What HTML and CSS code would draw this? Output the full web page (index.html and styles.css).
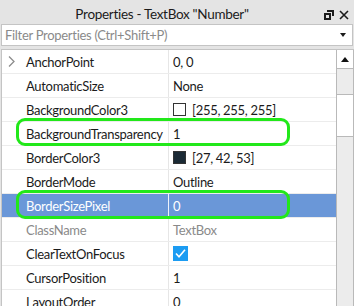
FILE: index.html
```html
<!DOCTYPE html>
<html lang="en">
<head>
    <meta charset="UTF-8">
    <meta name="viewport" content="width=device-width, initial-scale=1.0">
    <title>Properties</title>
    <link rel="stylesheet" href="styles.css">
</head>
<body>
    <div class="panel">
        <div class="titlebar">
            <span class="title">Properties - TextBox "Number"</span>
            <div class="title-icons">
                <svg width="10" height="10" viewBox="0 0 10 10">
                    <path d="M3 1h6v5" fill="none" stroke="#1b1b1b" stroke-width="2"/>
                    <rect x="1" y="4" width="5" height="5" fill="none" stroke="#1b1b1b" stroke-width="2"/>
                </svg>
                <svg width="10" height="10" viewBox="0 0 10 10">
                    <path d="M1 1l8 8M9 1l-8 8" stroke="#1b1b1b" stroke-width="1.6"/>
                </svg>
            </div>
        </div>

        <div class="filter">
            <span class="placeholder">Filter Properties (Ctrl+Shift+P)</span>
            <span class="dropdown"></span>
        </div>

        <div class="content">
            <div class="rows">
                <div class="row">
                    <div class="name">
                        <svg class="chevron" width="7" height="11" viewBox="0 0 7 11">
                            <path d="M1 0.5l5 5-5 5" fill="none" stroke="#8c8c8c" stroke-width="1.3"/>
                        </svg>
                        AnchorPoint
                    </div>
                    <div class="value">0, 0</div>
                </div>
                <div class="row">
                    <div class="name">AutomaticSize</div>
                    <div class="value">None</div>
                </div>
                <div class="row">
                    <div class="name">BackgroundColor3</div>
                    <div class="value"><span class="swatch swatch-white"></span>[255, 255, 255]</div>
                </div>
                <div class="row">
                    <div class="name">BackgroundTransparency</div>
                    <div class="value">1</div>
                </div>
                <div class="row">
                    <div class="name">BorderColor3</div>
                    <div class="value"><span class="swatch swatch-dark"></span>[27, 42, 53]</div>
                </div>
                <div class="row">
                    <div class="name">BorderMode</div>
                    <div class="value">Outline</div>
                </div>
                <div class="row selected">
                    <div class="name">BorderSizePixel</div>
                    <div class="value">0</div>
                </div>
                <div class="row readonly">
                    <div class="name">ClassName</div>
                    <div class="value">TextBox</div>
                </div>
                <div class="row">
                    <div class="name">ClearTextOnFocus</div>
                    <div class="value">
                        <span class="checkbox">
                            <svg width="15" height="15" viewBox="0 0 15 15">
                                <path d="M3 7.5l3 3.2 6-7" fill="none" stroke="#fff" stroke-width="1.6"/>
                            </svg>
                        </span>
                    </div>
                </div>
                <div class="row">
                    <div class="name">CursorPosition</div>
                    <div class="value">1</div>
                </div>
                <div class="row">
                    <div class="name">LayoutOrder</div>
                    <div class="value">0</div>
                </div>

                <div class="mark mark-one"></div>
                <div class="mark mark-two"></div>
            </div>
            <div class="scrollbar">
                <div class="scroll-up"><span class="arrow"></span></div>
                <div class="scroll-track"></div>
                <div class="scroll-thumb"></div>
                <div class="scroll-rest"></div>
            </div>
        </div>
    </div>
</body>
</html>
```

FILE: styles.css
```css
body {
    margin: 0;
    padding: 0;
    font-family: Lato, "Noto Sans", sans-serif;
    font-size: 13px;
    letter-spacing: -0.3px;
    color: #1b1b1b;
}
.panel {
    width: 354px;
    height: 306px;
    background-color: #e4e4e4;
    display: flex;
    flex-direction: column;
    overflow: hidden;
}
.titlebar {
    height: 24px;
    flex-shrink: 0;
    display: flex;
    align-items: center;
    justify-content: center;
    position: relative;
}
.title {
    font-size: 13.5px;
    margin-right: 30px;
    margin-top: 4px;
}
.title-icons {
    position: absolute;
    right: 5px;
    top: 10px;
    display: flex;
    gap: 5px;
}
.filter {
    height: 20px;
    margin: 0 1px;
    background: #fff;
    border: 1px solid #c4c4c4;
    display: flex;
    align-items: center;
    justify-content: space-between;
    padding: 0 6px 0 3px;
}
.placeholder {
    color: #8a8a8a;
}
.dropdown {
    width: 0;
    height: 0;
    border-left: 3px solid transparent;
    border-right: 3px solid transparent;
    border-top: 4px solid #1b1b1b;
}
.content {
    flex: 1;
    margin-top: 3px;
    margin-left: 1px;
    display: flex;
    border-top: 1px solid #c4c4c4;
    border-left: 1px solid #c4c4c4;
    overflow: hidden;
}
.rows {
    flex: 1;
    background: #fff;
    position: relative;
}
.row {
    height: 23px;
    display: flex;
    border-bottom: 1px solid #ececec;
}
.name {
    width: 142px;
    padding-left: 24px;
    display: flex;
    align-items: center;
    position: relative;
    border-right: 1px solid #e6e6e6;
}
.chevron {
    position: absolute;
    left: 6px;
    top: 6px;
}
.value {
    flex: 1;
    padding-left: 4px;
    display: flex;
    align-items: center;
}
.swatch {
    width: 11px;
    height: 11px;
    border: 1px solid #333;
    margin-right: 6px;
}
.swatch-white {
    background: #fff;
}
.swatch-dark {
    background: #1b2a35;
}
.checkbox {
    width: 15px;
    height: 15px;
    background: #1c9cf2;
    display: flex;
}
.selected {
    background: #6a97d8;
    color: #fff;
}
.selected .name {
    border-right-color: #eef3fb;
}
.readonly {
    color: #8a8a8a;
}
.mark {
    position: absolute;
    left: 14px;
    width: 268px;
    border: 3px solid #22e81a;
    border-radius: 9px;
}
.mark-one {
    top: 68px;
    height: 22px;
}
.mark-two {
    top: 140px;
    height: 23px;
}
.scrollbar {
    width: 16px;
    border-left: 1px solid #b9b9b9;
    border-right: 1px solid #b9b9b9;
    background: #ececec;
    display: flex;
    flex-direction: column;
}
.scroll-up {
    height: 18px;
    background: #fff;
    border-bottom: 1px solid #b9b9b9;
    display: flex;
    align-items: center;
    justify-content: center;
}
.arrow {
    width: 0;
    height: 0;
    border-left: 4px solid transparent;
    border-right: 4px solid transparent;
    border-bottom: 5px solid #111;
}
.scroll-track {
    height: 25px;
}
.scroll-thumb {
    height: 41px;
    background: #fff;
    border-top: 1px solid #b9b9b9;
    border-bottom: 1px solid #b9b9b9;
}
.scroll-rest {
    flex: 1;
}
```
